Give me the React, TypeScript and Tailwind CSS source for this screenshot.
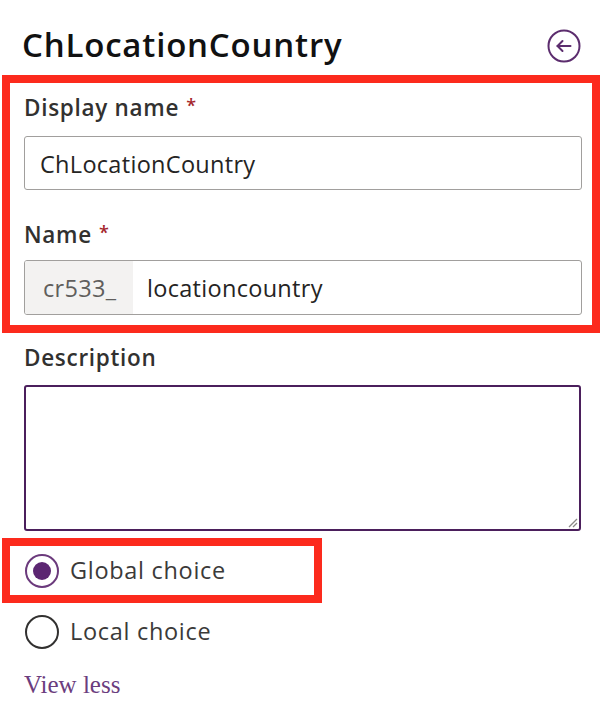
import { ReactNode } from 'react';

const font = { fontFamily: '"Open Sans", "Noto Sans", sans-serif' };

const Label = ({ children, required }: { children: ReactNode; required?: boolean }) => (
  <div className="h-[28px] flex items-center text-[22.5px] font-semibold text-[#323130] leading-none tracking-[0.7px]">
    {children}
    {required && <span className="ml-[7px] text-[#a4262c] text-[18px] -mt-[7px]">*</span>}
  </div>
);

const BackIcon = () => (
  <svg width="36" height="36" viewBox="0 0 36 36" fill="none">
    <circle cx="18" cy="18" r="15.5" stroke="#5c2d6e" strokeWidth="2" />
    <path d="M11.5 18h13" stroke="#5c2d6e" strokeWidth="2" strokeLinecap="round" />
    <path d="M16.5 13L11.5 18l5 5" stroke="#5c2d6e" strokeWidth="2" strokeLinecap="round" strokeLinejoin="round" />
  </svg>
);

const Radio = ({ checked }: { checked?: boolean }) => (
  <div
    className={`w-[34px] h-[34px] rounded-full flex items-center justify-center shrink-0 border-[2px] ${
      checked ? 'border-[#6b3a7c]' : 'border-[#323130]'
    }`}
  >
    {checked && <div className="w-[18px] h-[18px] rounded-full bg-[#5c2672]" />}
  </div>
);

export default function App() {
  return (
    <div className="w-[603px] h-[715px] bg-white pl-[24px] pr-[22px] pt-[17px] overflow-hidden" style={font}>
      {/* Header */}
      <div className="h-[58px] flex items-center justify-between">
        <h1 className="text-[33px] font-semibold text-[#111] tracking-[0.8px] -ml-[2px] -mt-[2px]">ChLocationCountry</h1>
        <div className="-mr-[1px] -mt-[1px]">
          <BackIcon />
        </div>
      </div>

      {/* Highlighted name fields */}
      <div className="-ml-[22px] -mr-[19px] border-[8px] border-[#fc2a1d] pl-[14px] pr-[10px] pt-[11px] pb-[10px]">
        <Label required>Display name</Label>
        <div className="mt-[14px] h-[54px] border border-[#a19f9d] rounded-[3px] flex items-center pl-[15px] pt-[3px] text-[23.5px] tracking-[0.3px] text-[#252423]">
          ChLocationCountry
        </div>
        <div className="mt-[31px]">
          <Label required>Name</Label>
        </div>
        <div className="mt-[11px] h-[55px] border border-[#a19f9d] rounded-[3px] flex overflow-hidden text-[23.5px] tracking-[0.3px]">
          <div className="w-[108px] bg-[#f3f2f1] flex items-center pl-[18px] pt-[3px] text-[#605e5c]">cr533_</div>
          <div className="flex items-center pl-[14px] pt-[3px] text-[#252423]">locationcountry</div>
        </div>
      </div>

      {/* Description */}
      <div className="mt-[11px]">
        <Label>Description</Label>
      </div>
      <div className="mt-[13px] h-[146px] border-[2px] border-[#4b1f5c] rounded-[3px] relative">
        <svg className="absolute right-[1px] bottom-[1px]" width="12" height="12" viewBox="0 0 12 12">
          <path d="M11 3L3 11M11 7L7 11" stroke="#8a8886" strokeWidth="1.3" />
        </svg>
      </div>

      {/* Choice type */}
      <div className="mt-[7px] -ml-[22px] w-[320px] h-[65px] border-[8px] border-[#fc2a1d] flex items-center pl-[15px] gap-[11px]">
        <Radio checked />
        <span className="text-[23.5px] tracking-[0.7px] text-[#3b3a39]">Global choice</span>
      </div>
      <div className="mt-[12px] h-[34px] flex items-center gap-[11px] pl-[1px]">
        <Radio />
        <span className="text-[23.5px] tracking-[0.7px] text-[#3b3a39]">Local choice</span>
      </div>

      <div
        className="mt-[22px] h-[28px] flex items-center text-[25px] text-[#6b3d7e]"
        style={{ fontFamily: '"Liberation Serif", serif' }}
      >
        View less
      </div>
    </div>
  );
}
